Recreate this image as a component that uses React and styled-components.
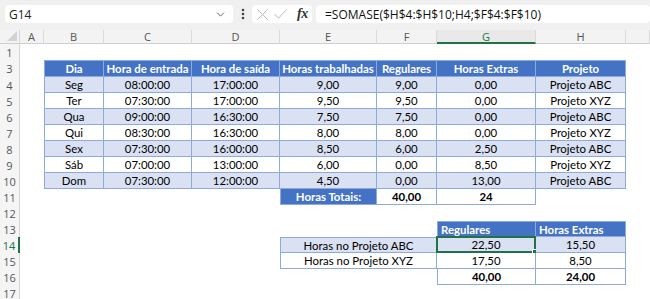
import React from 'react';
import styled, { createGlobalStyle } from 'styled-components';
import { ChevronDown } from 'lucide-react';

const Global = createGlobalStyle`
  html, body { margin: 0; padding: 0; background: #fff; }
  body { font-family: 'Lato', 'Liberation Sans', sans-serif; }
`;

const LINE = '#8ea9db';
const BLUE = '#4472c4';
const BAND = '#d9e1f2';
const GREEN = '#217346';

const COLS = ['A', 'B', 'C', 'D', 'E', 'F', 'G', 'H', 'I'];
const ROWS = [1, 3, 4, 5, 6, 7, 8, 9, 10, 11, 12, 13, 14, 15, 16, 17];
const SEL_COL = 'G';
const SEL_ROW = 14;

const cells = {};
const put = (c, r, v, t, extra = {}) => {
  cells[c + r] = { v, t, ...extra };
};
const head = ['Dia', 'Hora de entrada', 'Hora de saída', 'Horas trabalhadas', 'Regulares', 'Horas Extras', 'Projeto'];
'BCDEFGH'.split('').forEach((c, i) => put(c, 3, head[i], 'hd'));
const data = [
  ['Seg', '08:00:00', '17:00:00', '9,00', '9,00', '0,00', 'Projeto ABC'],
  ['Ter', '07:30:00', '17:00:00', '9,50', '9,50', '0,00', 'Projeto XYZ'],
  ['Qua', '09:00:00', '16:30:00', '7,50', '7,50', '0,00', 'Projeto ABC'],
  ['Qui', '08:30:00', '16:30:00', '8,00', '8,00', '0,00', 'Projeto XYZ'],
  ['Sex', '07:30:00', '16:00:00', '8,50', '6,00', '2,50', 'Projeto ABC'],
  ['Sáb', '07:00:00', '13:00:00', '6,00', '0,00', '8,50', 'Projeto XYZ'],
  ['Dom', '07:30:00', '12:00:00', '4,50', '0,00', '13,00', 'Projeto ABC'],
];
data.forEach((row, i) => {
  row.forEach((v, j) => put('BCDEFGH'[j], 4 + i, v, i % 2 === 0 ? 'band' : 'w'));
});
put('E', 11, 'Horas Totais:', 'hd');
put('F', 11, '40,00', 'tot');
put('G', 11, '24', 'tot');
put('G', 13, 'Regulares', 'hdl');
put('H', 13, 'Horas Extras', 'hdl');
put('E', 14, 'Horas no Projeto ABC', 'band', { span: 2 });
put('F', 14, null, 'cov');
put('G', 14, '22,50', 'band', { sel: true });
put('H', 14, '15,50', 'band');
put('E', 15, 'Horas no Projeto XYZ', 'w', { span: 2 });
put('F', 15, null, 'cov');
put('G', 15, '17,50', 'w');
put('H', 15, '8,50', 'w');
put('G', 16, '40,00', 'tot');
put('H', 16, '24,00', 'tot');

const Page = styled.div`
  width: 650px;
  height: 299px;
  overflow: hidden;
  display: flex;
  flex-direction: column;
  background: #fff;
`;

const Toolbar = styled.div`
  height: 30px;
  flex: none;
  box-sizing: border-box;
  background: #f0f0f0;
  display: flex;
  align-items: flex-start;
  padding: 5px 0 0 5px;
  font-family: 'Open Sans', 'Noto Sans', sans-serif;
`;

const Field = styled.div`
  height: 18px;
  background: #fff;
  border-radius: 4px;
  display: flex;
  align-items: center;
  box-sizing: border-box;
  width: ${p => p.$w};
  padding: ${p => p.$pad || '0'};
  flex: ${p => (p.$grow ? '1' : 'none')};
  margin-left: ${p => p.$ml || '0'};
  color: #222;
  font-size: 12px;
  white-space: nowrap;
`;

const NameText = styled.span`
  flex: 1;
`;

const Dots = styled.div`
  width: 19px;
  height: 18px;
  display: flex;
  align-items: center;
  justify-content: center;
  flex: none;
`;

const Glyph = styled.svg`
  display: block;
  flex: none;
  margin-right: ${p => p.$mr || '0'};
`;

const FxText = styled.span`
  font-family: 'Liberation Serif', serif;
  font-style: italic;
  font-weight: bold;
  font-size: 14px;
  color: #333;
  letter-spacing: -0.5px;
`;

const Formula = styled.span`
  font-size: 12px;
  color: #111;
`;

const Sheet = styled.div`
  display: grid;
  grid-template-columns: 20px 24px 60px 88px 88px 97px 60px 99px 90px 1fr;
  grid-template-rows: 14px 16px 17px repeat(14, 16px);
`;

const Corner = styled.div`
  background: #f3f3f3;
  border-right: 1px solid #d6d6d6;
  border-bottom: 1px solid #cfcfcf;
  box-sizing: border-box;
  position: relative;
  &::after {
    content: '';
    position: absolute;
    right: 2px;
    bottom: 2px;
    width: 0;
    height: 0;
    border-left: 10px solid transparent;
    border-bottom: 10px solid #d3d3d3;
  }
`;

const ColHead = styled.div`
  background: ${p => (p.$sel ? '#e9e9e9' : '#f3f3f3')};
  border-right: 1px solid #dadada;
  border-bottom: ${p => (p.$sel ? `2px solid ${GREEN}` : '1px solid #cfcfcf')};
  box-sizing: border-box;
  display: flex;
  align-items: center;
  justify-content: center;
  font-family: 'Open Sans', 'Noto Sans', sans-serif;
  font-size: 11px;
  color: ${p => (p.$sel ? GREEN : '#555')};
`;

const RowHead = styled.div`
  background: #f5f5f5;
  border-right: ${p => (p.$sel ? `2px solid ${GREEN}` : '1px solid #d6d6d6')};
  box-sizing: border-box;
  display: flex;
  align-items: center;
  justify-content: center;
  font-family: 'Open Sans', 'Noto Sans', sans-serif;
  font-size: 11px;
  color: ${p => (p.$sel ? GREEN : '#555')};
`;

const bgFor = t => (t === 'hd' || t === 'hdl' ? BLUE : t === 'band' ? BAND : '#fff');

const Cell = styled.div`
  grid-column: span ${p => p.$span || 1};
  position: relative;
  box-sizing: border-box;
  display: flex;
  align-items: center;
  justify-content: ${p => (p.$t === 'hdl' ? 'flex-start' : 'center')};
  padding: 0 3px;
  background: ${p => bgFor(p.$t)};
  color: ${p => (p.$t === 'hd' || p.$t === 'hdl' ? '#fff' : '#000')};
  font-weight: ${p => (p.$t === 'hd' || p.$t === 'hdl' || p.$t === 'tot' ? 700 : 400)};
  font-size: 11.4px;
  white-space: nowrap;
  border-right: ${p => (p.$bd ? `1px solid ${LINE}` : '0')};
  border-bottom: ${p => (p.$bd ? `1px solid ${LINE}` : '0')};
  border-top: ${p => (p.$bt ? `1px solid ${LINE}` : '0')};
  border-left: ${p => (p.$bl ? `1px solid ${LINE}` : '0')};
`;

const Selection = styled.span`
  position: absolute;
  left: -1px;
  top: -1px;
  right: -1px;
  bottom: -1px;
  border: 2px solid ${GREEN};
  pointer-events: none;
  &::after {
    content: '';
    position: absolute;
    right: -4px;
    bottom: -4px;
    width: 4px;
    height: 4px;
    background: ${GREEN};
    border: 1px solid #fff;
  }
`;

function VDots() {
  return (
    <svg width="4" height="12" viewBox="0 0 4 12">
      <circle cx="2" cy="2" r="1.3" fill="#444" />
      <circle cx="2" cy="6" r="1.3" fill="#444" />
      <circle cx="2" cy="10" r="1.3" fill="#444" />
    </svg>
  );
}

export default function App() {
  const items = [];
  items.push(<Corner key="corner" />);
  COLS.forEach(c =>
    items.push(
      <ColHead key={'h' + c} $sel={c === SEL_COL}>
        {c === 'I' ? '' : c}
      </ColHead>
    )
  );
  ROWS.forEach((r, ri) => {
    items.push(
      <RowHead key={'r' + r} $sel={r === SEL_ROW}>
        {r}
      </RowHead>
    );
    COLS.forEach((c, ci) => {
      const cell = cells[c + r];
      if (cell && cell.t === 'cov') return;
      const bd = !!cell;
      const above = ri > 0 ? cells[c + ROWS[ri - 1]] : null;
      const left = ci > 0 ? cells[COLS[ci - 1] + r] : null;
      items.push(
        <Cell
          key={c + r}
          $t={cell ? cell.t : 'empty'}
          $span={cell ? cell.span : 1}
          $bd={bd}
          $bt={bd && !above}
          $bl={bd && !left}
        >
          {cell ? cell.v : ''}
          {cell && cell.sel ? <Selection /> : null}
        </Cell>
      );
    });
  });

  return (
    <Page>
      <Global />
      <Toolbar>
        <Field $w="228px" $pad="0 6px 0 4px">
          <NameText>G14</NameText>
          <ChevronDown size={13} color="#555" strokeWidth={1.6} />
        </Field>
        <Dots>
          <VDots />
        </Dots>
        <Field $w="60px" $pad="0 0 0 5px">
          <Glyph width="11" height="11" viewBox="0 0 11 11" $mr="6px">
            <path d="M0.5 0.5 L10.5 10.5 M10.5 0.5 L0.5 10.5" stroke="#b8b8b8" strokeWidth="1" fill="none" />
          </Glyph>
          <Glyph width="13" height="10" viewBox="0 0 13 10" $mr="10px">
            <path d="M0.5 5 L4.5 9.2 L12.5 0.6" stroke="#b8b8b8" strokeWidth="1" fill="none" />
          </Glyph>
          <FxText>fx</FxText>
        </Field>
        <Field $grow $pad="0 0 0 9px" $ml="4px">
          <Formula>=SOMASE($H$4:$H$10;H4;$F$4:$F$10)</Formula>
        </Field>
      </Toolbar>
      <Sheet>{items}</Sheet>
    </Page>
  );
}
